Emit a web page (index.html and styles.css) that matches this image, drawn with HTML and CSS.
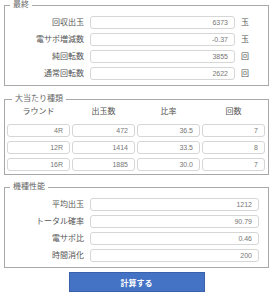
FILE: index.html
```html
<!DOCTYPE html>
<html lang="ja">
<head>
  <meta charset="UTF-8" />
  <title>収支計算</title>
  <meta name="viewport" content="width=device-width, initial-scale=1.0" />
  <link rel="stylesheet" href="styles.css">
</head>
<body>

  <fieldset class="box box-final">
    <legend>最終</legend>
    <div class="rows rows-unit">
      <label>回収出玉</label><input type="text" value="6373" readonly /><span class="unit">玉</span>
      <label>電サポ増減数</label><input type="text" value="-0.37" readonly /><span class="unit">玉</span>
      <label>純回転数</label><input type="text" value="3855" readonly /><span class="unit">回</span>
      <label>通常回転数</label><input type="text" value="2622" readonly /><span class="unit">回</span>
    </div>
  </fieldset>

  <fieldset class="box box-hit">
    <legend>大当たり種類</legend>
    <div class="table">
      <div class="th">ラウンド</div>
      <div class="th">出玉数</div>
      <div class="th">比率</div>
      <div class="th">回数</div>

      <input type="text" value="4R" readonly />
      <input type="text" value="472" readonly />
      <input type="text" value="36.5" readonly />
      <input type="text" value="7" readonly />

      <input type="text" value="12R" readonly />
      <input type="text" value="1414" readonly />
      <input type="text" value="33.5" readonly />
      <input type="text" value="8" readonly />

      <input type="text" value="16R" readonly />
      <input type="text" value="1885" readonly />
      <input type="text" value="30.0" readonly />
      <input type="text" value="7" readonly />
    </div>
  </fieldset>

  <fieldset class="box box-spec">
    <legend>機種性能</legend>
    <div class="rows">
      <label>平均出玉</label><input type="text" value="1212" readonly />
      <label>トータル確率</label><input type="text" value="90.79" readonly />
      <label>電サポ比</label><input type="text" value="0.46" readonly />
      <label>時間消化</label><input type="text" value="200" readonly />
    </div>
  </fieldset>

  <button type="button" class="calc">計算する</button>

</body>
</html>
```

FILE: styles.css
```css
body {
  margin: 0;
  padding: 0 6px 0 4px;
  font-family: "Liberation Sans", "Noto Sans CJK JP", sans-serif;
  background-color: #fff;
  color: #555;
}

.box {
  margin: 0;
  padding: 6px 0 5px 0;
  border: 1px solid #a8a8a8;
}

.box legend {
  margin-left: 5px;
  padding: 0 3px;
  font-size: 8px;
  line-height: 10px;
  color: #666;
}

.box-hit {
  margin-top: 8px;
  padding: 0 3px 3px 2px;
}

.box-spec {
  margin-top: 7px;
}

.rows {
  display: grid;
  grid-template-columns: 80px 169px;
  column-gap: 5px;
  row-gap: 4px;
  align-items: center;
}

.rows-unit {
  grid-template-columns: 80px 145px 1fr;
}

.rows label {
  text-align: right;
  padding-right: 1px;
  font-size: 8px;
  line-height: 13px;
  white-space: nowrap;
}

.unit {
  padding-left: 1px;
  font-size: 8px;
  line-height: 13px;
}

input[type=text] {
  box-sizing: border-box;
  width: 100%;
  height: 13px;
  margin: 0;
  padding: 0 6px;
  border: 1px solid #d6d6d6;
  border-radius: 3px;
  background-color: #fff;
  font-family: "Liberation Sans", sans-serif;
  font-size: 7px;
  color: #777;
  text-align: right;
}

.table {
  display: grid;
  grid-template-columns: repeat(4, 1fr);
  column-gap: 2px;
  row-gap: 4px;
}

.th {
  text-align: center;
  font-size: 8px;
  line-height: 16px;
}

.calc {
  display: block;
  width: 136px;
  height: 20px;
  margin: 4px auto 0;
  padding: 0;
  border: 1px solid #3a62ab;
  background-color: #4472c4;
  color: #fff;
  font-family: "Liberation Sans", "Noto Sans CJK JP", sans-serif;
  font-size: 8px;
  font-weight: bold;
  cursor: pointer;
}
```
